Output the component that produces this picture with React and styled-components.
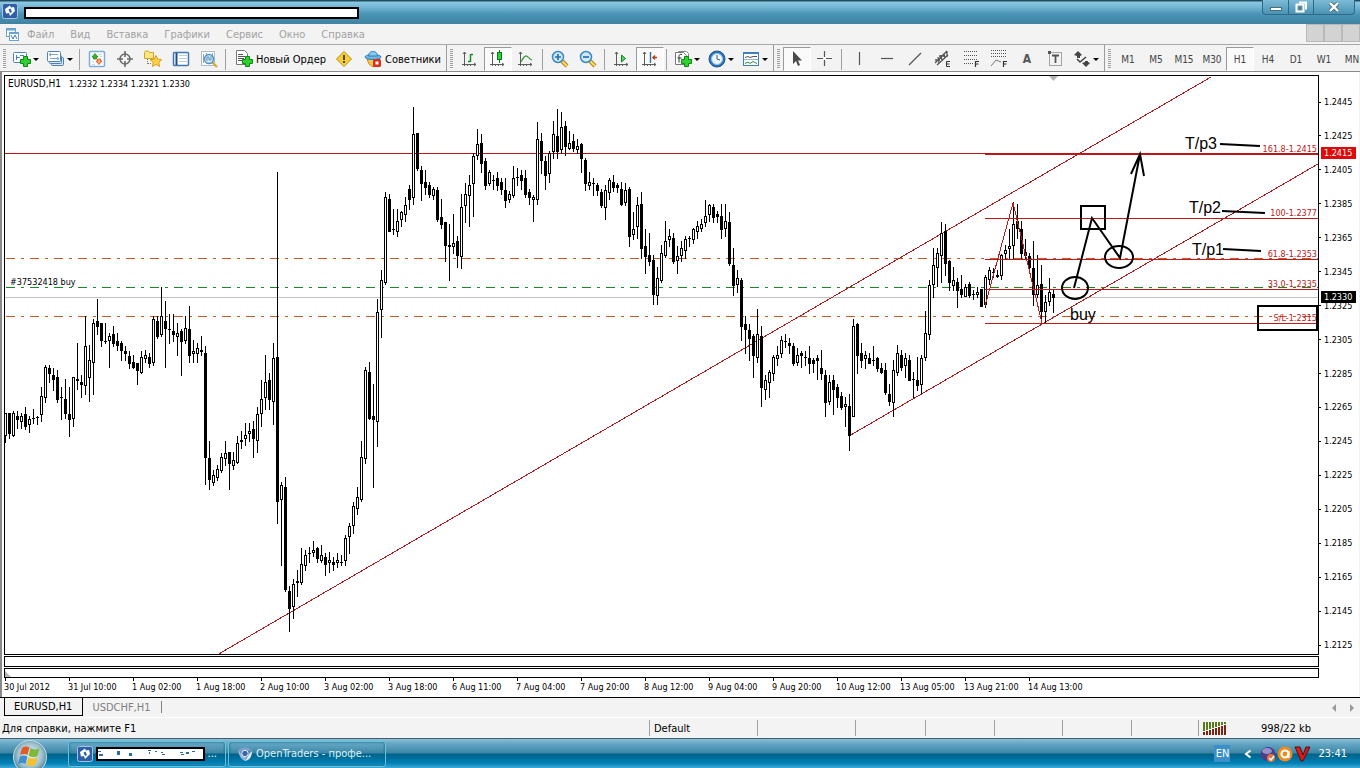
import React from 'react';
import styled, { createGlobalStyle } from 'styled-components';

const GlobalStyle = createGlobalStyle`
  * {
    box-sizing: border-box;
  }
  body {
    margin: 0;
    background: #f3f3f3;
    color: #000;
    font-family: 'DejaVu Sans Condensed', 'DejaVu Sans', sans-serif;
    font-size: 11px;
  }
  button {
    border: 0;
    padding: 0;
    background: none;
    font: inherit;
    color: inherit;
    white-space: nowrap;
  }
  svg {
    display: block;
    flex: none;
  }
`;

// one candle each 4px: high, top of body, bottom of body, low, u(p) / d(own)
const CANDLES = `
413 413 436 443 u|413 413 434 439 d|411 413 436 437 u|411 416 420 429 d|413 416 422 429 u|407 414 427 430 d|416 419 425 433 u|409 418 419 424 d|
416 417 418 425 d|387 396 415 422 u|365 367 398 403 u|365 368 374 383 d|368 375 380 391 d|370 377 400 403 d|387 397 398 420 d|379 399 414 419 d|
387 414 420 437 d|377 377 419 427 u|343 379 381 390 d|375 382 385 398 d|316 346 386 395 u|345 360 378 402 u|319 323 363 395 u|299 321 327 335 d|
323 323 341 347 d|323 341 342 344 d|333 336 341 368 u|326 334 344 347 d|333 341 346 351 d|341 343 351 361 d|346 351 354 361 d|351 356 364 369 d|
355 362 368 369 d|363 363 371 385 d|351 357 373 374 u|350 355 359 363 u|353 357 364 368 d|316 319 363 366 u|316 321 337 339 d|287 316 335 337 u|
301 321 329 368 d|314 329 330 344 d|314 331 335 342 d|323 333 337 356 u|329 331 342 376 d|316 328 341 344 u|306 329 356 363 d|340 351 354 363 u|
343 348 354 363 u|336 350 352 356 d|346 353 458 485 d|441 458 480 490 d|470 475 483 486 u|465 469 478 481 u|453 457 471 473 u|441 453 459 466 u|
452 452 464 490 d|452 460 466 470 u|436 443 463 464 u|431 440 442 449 d|423 435 439 446 u|423 431 434 442 u|421 429 439 458 d|407 414 441 453 u|
380 399 414 427 u|355 382 398 410 u|373 380 400 410 d|343 358 402 425 u|172 357 502 524 d|482 485 500 566 u|477 487 590 592 d|586 591 609 632 d|
579 584 607 619 u|570 581 583 597 d|548 564 583 585 u|550 555 566 571 u|547 553 554 563 d|541 550 553 557 u|547 548 559 563 d|545 555 561 563 u|
553 557 565 576 d|552 560 563 573 u|557 562 565 571 d|553 560 563 568 u|555 562 563 566 d|535 538 561 566 u|523 526 537 554 u|502 506 526 534 u|
487 497 509 515 u|441 457 500 502 u|367 370 459 464 u|362 372 419 420 d|384 416 420 488 d|299 312 422 447 u|270 280 310 338 u|192 197 283 285 u|
194 199 232 232 d|209 229 230 235 d|209 221 232 237 u|211 212 220 227 u|197 205 215 222 u|185 189 200 210 d|107 134 198 205 u|133 133 169 171 d|
166 170 184 201 d|170 182 188 195 d|182 185 195 198 d|187 189 196 200 u|187 190 220 222 d|199 217 225 229 d|222 222 246 262 d|224 245 247 281 d|
214 243 247 254 u|236 241 256 268 d|194 207 257 269 u|183 194 206 223 u|175 185 196 227 u|153 156 184 217 u|129 144 156 160 u|134 143 164 173 d|
158 161 186 190 d|170 172 184 186 u|175 180 181 190 d|172 178 186 191 d|178 182 190 195 d|178 190 201 208 d|191 194 200 203 u|166 178 196 198 u|
168 177 178 186 d|170 175 181 190 d|170 178 195 198 d|189 192 198 205 d|195 197 200 222 u|122 139 200 205 u|133 141 161 174 d|156 161 176 190 d|
151 153 174 183 u|121 134 152 159 u|109 136 152 159 d|112 127 150 154 u|121 126 147 156 d|131 143 149 150 u|134 141 149 152 d|139 146 150 154 u|
143 144 159 173 d|158 160 184 191 d|172 182 186 190 u|178 183 184 196 d|183 185 191 196 d|189 192 206 208 d|185 190 208 220 u|178 180 193 200 u|
175 182 188 192 d|183 185 188 193 d|182 189 205 206 d|183 190 203 206 u|187 189 237 247 d|212 229 235 240 u|197 205 227 239 u|192 204 249 259 d|
229 246 257 274 d|233 255 262 266 d|255 260 295 305 d|267 278 296 305 u|245 253 281 283 u|221 241 256 258 u|229 236 240 247 u|233 238 262 264 d|
246 256 261 274 u|241 248 256 262 u|236 239 251 259 u|236 238 239 247 d|228 229 240 244 u|221 226 232 239 u|219 224 229 232 u|200 216 223 227 u|
204 205 215 222 u|204 207 218 223 d|211 214 217 223 d|204 216 230 239 d|204 221 229 237 u|212 222 264 266 d|248 265 286 296 d|270 278 285 293 u|
278 280 327 341 d|316 324 330 354 d|324 330 339 361 d|334 336 356 378 d|309 334 358 363 u|326 336 388 407 d|375 380 390 400 u|370 372 383 398 u|
355 357 374 381 u|346 355 359 366 u|336 340 354 358 u|334 341 342 348 d|338 343 346 354 d|343 346 364 366 d|348 355 363 366 u|351 353 356 368 d|
351 357 358 366 d|346 358 364 374 d|358 360 364 373 d|355 358 361 380 d|350 368 374 380 d|370 375 403 417 d|375 382 402 405 u|375 380 390 415 d|
384 387 398 408 d|392 396 408 410 d|397 404 407 427 u|394 406 436 451 d|319 326 417 417 u|323 324 356 374 d|343 353 361 368 d|351 355 359 369 u|
353 358 364 364 d|346 360 361 366 d|357 358 369 372 d|363 368 373 374 d|363 370 393 395 d|384 394 402 406 d|360 370 403 417 u|345 353 373 376 u|
350 355 368 371 d|353 358 366 378 u|355 360 381 381 d|372 379 380 398 d|357 380 386 391 d|355 358 385 394 u|311 333 358 361 u|280 285 335 340 u|
248 265 285 298 u|248 253 268 287 u|222 233 256 283 u|224 231 264 276 d|260 261 283 291 d|267 280 286 291 u|278 282 291 308 d|275 289 295 298 d|
284 287 297 297 u|282 284 296 298 d|290 294 295 300 d|287 292 295 298 u|289 289 307 307 d|275 277 305 308 u|267 270 280 285 u|268 272 273 278 d|
270 275 277 278 d|254 255 276 280 u|245 250 254 259 u|229 246 249 260 u|202 224 246 260 u|204 221 229 239 d|221 229 254 260 d|239 252 256 260 d|
253 256 268 270 d|241 268 295 306 d|255 285 295 298 u|265 284 312 324 d|295 302 312 324 u|278 292 302 306 u|290 294 298 313 d`
  .split('|')
  .map((row) => row.trim().split(' '))
  .map(([high, top, bottom, low, dir], i) => ({
    x: 5 + i * 4,
    high: +high,
    top: +top,
    bottom: +bottom,
    low: +low,
    up: dir === 'u',
  }));

const PRICES = [
  '1.2445', '1.2425', '1.2405', '1.2385', '1.2365', '1.2345', '1.2325', '1.2305', '1.2285',
  '1.2265', '1.2245', '1.2225', '1.2205', '1.2185', '1.2165', '1.2145', '1.2125',
];

const DATES = [
  '30 Jul 2012', '31 Jul 10:00', '1 Aug 02:00', '1 Aug 18:00', '2 Aug 10:00', '3 Aug 02:00',
  '3 Aug 18:00', '6 Aug 11:00', '7 Aug 04:00', '7 Aug 20:00', '8 Aug 12:00', '9 Aug 04:00',
  '9 Aug 20:00', '10 Aug 12:00', '13 Aug 05:00', '13 Aug 21:00', '14 Aug 13:00',
];

const FIBO = [
  { y: 154, label: '161.8-1.2415' },
  { y: 218, label: '100-1.2377' },
  { y: 259, label: '61.8-1.2353' },
  { y: 289, label: '33.0-1.2335' },
  { y: 323, label: 'S/L-1.2315' },
];

const MENU = ['Файл', 'Вид', 'Вставка', 'Графики', 'Сервис', 'Окно', 'Справка'];
const PERIODS = ['M1', 'M5', 'M15', 'M30', 'H1', 'H4', 'D1', 'W1', 'MN'];

/* ---------- icons ---------- */

const Icon = ({ w = 18, h = 18, children }) => (
  <svg width={w} height={h} viewBox={`0 0 ${w} ${h}`} fill="none" aria-hidden="true">
    {children}
  </svg>
);

const Plus = () => (
  <path d="M10.5 6.5h4v3h3v4h-3v3h-4v-3h-3v-4h3z" fill="#2fd02f" stroke="#0a8a12" />
);

const AppIcon = () => (
  <Icon w={16} h={16}>
    <rect x=".5" y=".5" width="15" height="15" rx="2" fill="#2f5fa6" stroke="#a9c3dc" />
    <path d="M3 6l5-3.500 1 2 3-.5 1 4-5 5-1-3-3 .5z" fill="#fff" />
    <path d="M6.500 6.500l2-1 1.500 3.500-2 1z" fill="#2f5fa6" />
  </Icon>
);

const ChartsIcon = () => (
  <Icon w={15} h={15}>
    <rect x="1.500" y="1.500" width="9" height="8" fill="#fff" stroke="#6aa3cf" />
    <path d="M1 2.500h10" stroke="#6aa3cf" strokeWidth="2" />
    <rect x="4.500" y="5.500" width="9" height="8" fill="#fff" stroke="#6aa3cf" />
    <path d="M4 6.500h10" stroke="#6aa3cf" />
    <path d="M6 8l2 4 2-4 2 4" stroke="#3f7fb4" />
  </Icon>
);

const NewChartIcon = () => (
  <Icon>
    <rect x=".5" y="2.500" width="13" height="10" rx="1" fill="#fff" stroke="#4c83b4" />
    <path d="M3.500 5v5M3 7.500h4M7 5.500h4" stroke="#4c83b4" />
    <Plus />
  </Icon>
);

const ProfilesIcon = () => (
  <Icon>
    <rect x="4.500" y="7.500" width="12" height="8" rx="1" fill="#d5e6f4" stroke="#4c83b4" />
    <rect x="2.500" y="5.500" width="12" height="8" rx="1" fill="#d5e6f4" stroke="#4c83b4" />
    <rect x=".5" y="1.500" width="13" height="10" rx="1" fill="#fff" stroke="#4c83b4" />
    <path d="M3 4.500h8M3 8.500h8M4 3l-2 1.500L4 6M10 7l2 1.500-2 1.500" stroke="#7ea6c8" />
  </Icon>
);

const MarketIcon = () => (
  <Icon>
    <rect x="1.500" y="1.500" width="15" height="15" rx="1" fill="#fff" stroke="#7badd6" strokeWidth="1.500" />
    <path d="M4 4.500h1M10 4.500h4M4 14.500h3M4 11.500h2M12 6.500h2" stroke="#c9d9e6" />
    <path d="M7 3.500l3 3.500H8.500v2h-3V7H4z" fill="#2fb82f" stroke="#178a1c" strokeWidth=".8" />
    <path d="M11 14.500l3-3.500h-1.500V9h-3v2H8z" fill="#ffa070" stroke="#d9501a" strokeWidth=".8" />
  </Icon>
);

const TargetIcon = () => (
  <Icon>
    <circle cx="9" cy="9" r="5" stroke="#6b6b6b" strokeWidth="1.600" />
    <path d="M9 1v6M9 11v6M1 9h6M11 9h6" stroke="#6b6b6b" strokeWidth="1.600" />
  </Icon>
);

const NavigatorIcon = () => (
  <Icon>
    <path d="M.5 2.500l1-1.500h3l1 1.500h4v6h-9z" fill="#ffe680" stroke="#cfa52a" />
    <path d="M3.500 9v6M4 13.500h4" stroke="#777" strokeDasharray="1 1" />
    <path d="M12 5.500l1.800 3.700 4 .5-3 2.700.8 4L12 14.500l-3.600 1.900.8-4-3-2.700 4-.5z" fill="#ffd23e" stroke="#c8920e" strokeWidth=".8" />
  </Icon>
);

const TerminalIcon = () => (
  <Icon>
    <rect x="1.500" y="2.500" width="15" height="13" rx="1" fill="#fff" stroke="#3f78b4" strokeWidth="1.500" />
    <path d="M4.500 3v12" stroke="#22507e" strokeWidth="2" />
    <path d="M7 5.500h8M7 8.500h8M7 11.500h8" stroke="#b7cfe4" />
  </Icon>
);

const TesterIcon = () => (
  <Icon>
    <rect x="1.500" y="1.500" width="13" height="14" fill="#fff" stroke="#a9bccb" />
    <path d="M3.500 4v9M6.500 3v8M12.500 3v9" stroke="#8fa8bb" />
    <path d="M12 12l5 5" stroke="#d9a83a" strokeWidth="2.400" />
    <circle cx="9" cy="9" r="4.500" fill="#d6ebfa" fillOpacity=".8" stroke="#4f8fc0" strokeWidth="1.400" />
    <path d="M7 11V7h2v3h2V6" stroke="#4f8fc0" />
  </Icon>
);

const OrderIcon = () => (
  <Icon>
    <path d="M1.500.5h8l3 3v11h-11z" fill="#fff" stroke="#777" />
    <path d="M3 4.500h5M3 6.500h7M3 8.500h6M3 10.500h4" stroke="#555" />
    <Plus />
  </Icon>
);

const WarningIcon = () => (
  <Icon>
    <path d="M9 1.500L16.500 9 9 16.500 1.500 9z" fill="#f5cf35" stroke="#b98f15" strokeLinejoin="round" />
    <path d="M9 5v5M9 11v2" stroke="#5c4800" strokeWidth="2" />
  </Icon>
);

const ExpertIcon = () => (
  <Icon>
    <path d="M3 9h12l-1 5-5 3-4-3z" fill="#f6c84b" stroke="#c58f1d" />
    <ellipse cx="9" cy="7" rx="8" ry="2.500" fill="#6cb7e6" stroke="#2f7fb3" />
    <path d="M4.500 6C5 2 7 1.500 9 1.500S13 2 13.500 6z" fill="#86caf2" stroke="#2f7fb3" />
    <rect x="9" y="9" width="8" height="8" rx="1.500" fill="#d9301f" />
    <rect x="11.500" y="11.500" width="3" height="3" fill="#fff" />
  </Icon>
);

const Axes = () => (
  <path d="M3.500 2v14M1 14.500h14M2 4l1.500-2L5 4M13 13l2 1.500-2 1.500M6.500 14v2M9.500 14v2" stroke="#5c5c5c" />
);

const BarsIcon = () => (
  <Icon>
    <Axes />
    <path d="M9.500 4v8M10 4.500h2M7 11.500h2" stroke="#128a20" strokeWidth="1.400" />
  </Icon>
);

const CandlesIcon = () => (
  <Icon>
    <Axes />
    <path d="M10.500 0v13" stroke="#0a7a18" />
    <rect x="8.500" y="2.500" width="4" height="7" fill="#2fce3e" stroke="#0a7a18" />
  </Icon>
);

const LineIcon = () => (
  <Icon>
    <Axes />
    <path d="M4 12c2-4 3-6 5-6s3 3 6 4" stroke="#3d9a48" strokeWidth="1.300" />
  </Icon>
);

const ZoomIcon = ({ minus }) => (
  <Icon>
    <path d="M11 11l5 5" stroke="#a37a18" strokeWidth="4" />
    <path d="M11 11l5 5" stroke="#ffd75a" strokeWidth="2.400" />
    <circle cx="7" cy="7" r="5.500" fill="#cfe8fb" stroke="#3a88c4" strokeWidth="1.500" />
    <path d={minus ? 'M4 7h6' : 'M4 7h6M7 4v6'} stroke="#2a6fae" strokeWidth="1.700" />
  </Icon>
);

const ScrollIcon = () => (
  <Icon>
    <Axes />
    <path d="M8.500 5l4 3.500-4 3.500z" fill="#4fd35a" stroke="#0e8a1c" />
  </Icon>
);

const ShiftIcon = () => (
  <Icon>
    <Axes />
    <path d="M9.500 2v11" stroke="#2f6da0" strokeWidth="1.400" />
    <path d="M16 7.500h-4M14 5.500L12 7.500l2 2" stroke="#b5401a" strokeWidth="1.500" />
  </Icon>
);

const IndicatorsIcon = () => (
  <Icon>
    <path d="M4.500 3.500v-2h8l2 2v9" fill="#fff" stroke="#888" />
    <path d="M1.500 2.500h8l3 3v9h-11z" fill="#fff" stroke="#777" />
    <path d="M8 4.500c-2-.5-3 0-3 2v6M3.500 8h4" stroke="#333" />
    <Plus />
  </Icon>
);

const ClockIcon = () => (
  <Icon>
    <circle cx="9" cy="9" r="8" fill="#2f74b8" stroke="#1d568f" />
    <circle cx="9" cy="9" r="5.500" fill="#eef6fd" stroke="#8ec1ea" />
    <path d="M9 5v4l3 1" stroke="#3a5a78" />
  </Icon>
);

const TemplateIcon = () => (
  <Icon>
    <rect x="1.500" y="2.500" width="15" height="13" fill="#fff" stroke="#3f80b8" />
    <path d="M1 3h16" stroke="#3f80b8" strokeWidth="2" />
    <path d="M3 7.500l3-1 2 1 3-1h4" stroke="#555" />
    <path d="M2 9.500h14" stroke="#8fb4d4" />
    <path d="M3 13.500l3-1.500 2 1.500 3-2 4 2" stroke="#2f8a3a" />
  </Icon>
);

const CursorIcon = () => (
  <Icon>
    <path d="M5 1v13l3-3 2 5 2-1-2-4.500h4z" fill="#4a4a4a" />
  </Icon>
);

const Stroke = ({ d }) => (
  <Icon>
    <path d={d} stroke="#555" strokeWidth="1.200" />
  </Icon>
);

const ChannelIcon = () => (
  <Icon>
    <path d="M1 13L13 1M3 15L14 5M4 7l1 6M7 5l1 6M10 3l1 6M13 1l0 6M1 10h5M5 6h6" stroke="#555" strokeWidth="1.300" />
    <path d="M16 11.500h-3.500v5H16M13 14h2.500" stroke="#333" />
  </Icon>
);

const FiboIcon = ({ fan }) => (
  <Icon>
    <path
      d={fan ? 'M1 .5h16M1 3.500h16M1 6.500h16' : 'M2 1.500h14M2 5.500h14M2 9.500h14M2 13.500h9'}
      stroke="#555"
      strokeDasharray="1 1"
    />
    {fan && <path d="M1 16l5-6 5 2" stroke="#777" />}
    <path d="M17 11.500h-3.500V17M14 14h2.500" stroke="#333" strokeWidth="1.200" />
  </Icon>
);

const LabelIcon = () => (
  <Icon>
    <rect x="3.500" y="2.500" width="12" height="13" stroke="#555" strokeDasharray="1 1" />
    <path d="M6 5.500h7M9.500 5v8" stroke="#555" strokeWidth="1.800" />
    <path d="M2 1h3v3H2z" fill="#555" />
  </Icon>
);

const ArrowsIcon = () => (
  <Icon>
    <path d="M5 1l4 4-2 1v2H4V6L1 5zM13 17l4-4-2-1v-1h-3v1l-3 1z" fill="#444" />
    <path d="M4 9l3 3 6-5" stroke="#444" strokeWidth="1.500" />
  </Icon>
);

const SignalIcon = () => (
  <svg width="24" height="13" viewBox="0 0 24 13" shapeRendering="crispEdges" aria-hidden="true">
    {[0, 1, 2, 3, 4, 5, 6, 7].map((i) => (
      <React.Fragment key={i}>
        <rect x={i * 3} y="0" width="2" height={9 - i} fill="#5a7a1e" />
        <rect x={i * 3} y={10 - i} width="2" height={3 + i} fill="#7c2412" />
      </React.Fragment>
    ))}
  </svg>
);

const StartOrb = () => (
  <svg width="36" height="28" viewBox="0 0 36 28" aria-hidden="true">
    <defs>
      <radialGradient id="orb" cx="50%" cy="45%" r="60%">
        <stop offset="0" stopColor="#eaf4f8" />
        <stop offset=".6" stopColor="#9fc3cf" />
        <stop offset="1" stopColor="#3b6f88" />
      </radialGradient>
    </defs>
    <circle cx="18" cy="17" r="16.500" fill="url(#orb)" stroke="#c5dde6" />
    <path d="M10 8c3-2 5-2 7.500-.5l-2 7.500c-2-1.500-5-1.500-7.500 0z" fill="#e4592b" />
    <path d="M18.500 8c3 2 6 2 9 .5l-2 7.500c-3 1.500-6 1.500-9-.5z" fill="#7fb83a" />
    <path d="M8 16.500c3-1.500 5-1.500 7.500 0l-2 7.500c-2-1.500-5-1.500-7.500 0z" fill="#3f8ed0" />
    <path d="M16.500 17c3 2 6 2 9 .5l-2 7.500c-3 1.500-6 1-9-.5z" fill="#f5c02c" />
  </svg>
);

const BrowserIcon = () => (
  <Icon w={16} h={16}>
    <path d="M1 5c2-4 11-5 14 0-3-1-5 0-6 2z" fill="#7f9fd0" />
    <path d="M1 4c1 6 3 9 7 11l2-5-4-1z" fill="#9db8e0" />
    <path d="M15 5c0 5-2 9-7 10l4-7z" fill="#dfe9f6" />
    <circle cx="8" cy="7.500" r="3.200" fill="#3c63a6" stroke="#e6eff9" />
  </Icon>
);

/* ---------- chart drawing ---------- */

const HLine = ({ x = 5, y, color }) => (
  <rect x={x} y={y} width={1318 - x} height="1" fill={color} stroke="none" />
);

const Candle = ({ x, high, top, bottom, low, up }) => (
  <g>
    <rect x={x} y={high} width="1" height={low - high} />
    {up ? (
      <rect x={x - 0.5} y={top + 0.5} width="2" height={Math.max(bottom - top - 1, 1)} fill="#fff" stroke="#000" />
    ) : (
      <rect x={x - 1} y={top} width="3" height={Math.max(bottom - top, 1)} />
    )}
  </g>
);

const ChartDrawing = () => (
  <PlotSvg aria-label="EURUSD,H1">
    <g transform="translate(-5 -76)">
      <g shapeRendering="crispEdges" fill="none">
        <HLine y={297} color="#c0c0c0" />
        <path d="M6 258.500H1318M6 316.500H1318" stroke="#cc5a24" strokeDasharray="9 6 3 6" />
        <path d="M6 287.500H1318" stroke="#148a24" strokeDasharray="9 6 3 6" />
        <path d="M217 655L1211 77M849 436L1318 164" stroke="#b01c1c" />
        <HLine y={153} color="#c01010" />
      </g>
      <g shapeRendering="crispEdges">
        {CANDLES.map((c) => (
          <Candle key={c.x} {...c} />
        ))}
      </g>
      <g shapeRendering="crispEdges" fill="none">
        <path d="M985 306L1013 203L1042 323" stroke="#b81c1c" />
        {FIBO.map(({ y }) => (
          <HLine key={y} x={985} y={y} color="#c41818" />
        ))}
      </g>
      <g fill="#c01818" fontSize="9" textAnchor="end">
        {FIBO.map(({ y, label }) => (
          <text key={y} x="1317" y={y - 2}>
            {label}
          </text>
        ))}
      </g>
      <path d="M1049 76h9l-4.500 5z" fill="#b4b4b4" />
      <text x="8" y="87" fontSize="10">EURUSD,H1</text>
      <text x="69" y="87" fontSize="9">1.2332 1.2334 1.2321 1.2330</text>
      <text x="10" y="285" fontSize="9">#37532418 buy</text>

      <g fill="none" stroke="#000" strokeWidth="2">
        <ellipse cx="1075" cy="288" rx="13" ry="11" />
        <ellipse cx="1119" cy="257" rx="14" ry="11" />
        <path d="M1081 206h24v23h-24z" />
        <path d="M1074 288L1092 218L1120 258L1140 154M1131 174L1140 154L1144 176" />
        <path d="M1220 144l40 2M1222 211l43 2M1223 249l38 2" />
        <path d="M1258 306h59v24h-59z" />
      </g>
      <Note x="1185" y="149">T/p3</Note>
      <Note x="1189" y="213">T/p2</Note>
      <Note x="1192" y="255">T/p1</Note>
      <Note x="1070" y="320">buy</Note>
    </g>
  </PlotSvg>
);

/* ---------- page ---------- */

const DropTool = ({ label, children }) => (
  <Tool $drop aria-label={label}>
    {children}
    <Caret />
  </Tool>
);

const App = () => (
  <Window>
    <GlobalStyle />
    <TitleBar>
      <AppIcon />
      <TitleMask />
      <WindowButtons>
        <WindowButton aria-label="Minimize">
          <Icon w={12} h={12}>
            <rect x=".5" y="6.500" width="11" height="3" fill="#fff" stroke="#4c6f80" />
          </Icon>
        </WindowButton>
        <WindowButton aria-label="Restore">
          <Icon w={12} h={12}>
            <path d="M4 1.500h7v7" stroke="#fff" strokeWidth="2" />
            <rect x="1.500" y="3.500" width="7" height="7" stroke="#fff" strokeWidth="2" />
            <rect x="4" y="6" width="2" height="2" stroke="#4c6f80" />
          </Icon>
        </WindowButton>
        <WindowButton $wide aria-label="Close">
          <Icon w={12} h={12}>
            <path d="M2 2l8 8M10 2l-8 8" stroke="#4c6f80" strokeWidth="4" />
            <path d="M2 2l8 8M10 2l-8 8" stroke="#fff" strokeWidth="2.400" />
          </Icon>
        </WindowButton>
      </WindowButtons>
    </TitleBar>

    <MenuBar>
      <ChartsIcon />
      <Menu>
        {MENU.map((item) => (
          <button key={item}>{item}</button>
        ))}
      </Menu>
      <ChildButtons>
        <ChildButton aria-label="Minimize chart" />
        <ChildButton aria-label="Restore chart" />
        <ChildButton aria-label="Close chart" />
      </ChildButtons>
    </MenuBar>

    <ToolBar>
      <ToolGroup>
        <Grip />
        <DropTool label="New chart"><NewChartIcon /></DropTool>
        <DropTool label="Profiles"><ProfilesIcon /></DropTool>
        <Divider />
        <Tool aria-label="Market watch"><MarketIcon /></Tool>
        <Tool aria-label="Data window"><TargetIcon /></Tool>
        <Tool aria-label="Navigator"><NavigatorIcon /></Tool>
        <Tool aria-label="Terminal"><TerminalIcon /></Tool>
        <Tool aria-label="Strategy tester"><TesterIcon /></Tool>
        <Divider />
        <TextTool>
          <OrderIcon />
          Новый Ордер
        </TextTool>
        <Tool aria-label="Warning"><WarningIcon /></Tool>
        <TextTool>
          <ExpertIcon />
          Советники
        </TextTool>
      </ToolGroup>
      <ToolGroup>
        <Grip />
        <Tool aria-label="Bar chart"><BarsIcon /></Tool>
        <Tool $pressed aria-label="Candlesticks"><CandlesIcon /></Tool>
        <Tool aria-label="Line chart"><LineIcon /></Tool>
        <Divider />
        <Tool aria-label="Zoom in"><ZoomIcon /></Tool>
        <Tool aria-label="Zoom out"><ZoomIcon minus /></Tool>
        <Divider />
        <Tool aria-label="Auto scroll"><ScrollIcon /></Tool>
        <Tool $pressed aria-label="Chart shift"><ShiftIcon /></Tool>
        <Divider />
        <DropTool label="Indicators"><IndicatorsIcon /></DropTool>
        <DropTool label="Periods"><ClockIcon /></DropTool>
        <DropTool label="Templates"><TemplateIcon /></DropTool>
      </ToolGroup>
      <ToolGroup>
        <Grip />
        <Tool $pressed aria-label="Cursor"><CursorIcon /></Tool>
        <Tool aria-label="Crosshair"><Stroke d="M8.500 1v6M8.500 10v6M1 8.500h6M10 8.500h6" /></Tool>
        <Divider />
        <Tool aria-label="Vertical line"><Stroke d="M9.500 2v13" /></Tool>
        <Tool aria-label="Horizontal line"><Stroke d="M3 8.500h12" /></Tool>
        <Tool aria-label="Trendline"><Stroke d="M3 15L15 3" /></Tool>
        <Tool aria-label="Channel"><ChannelIcon /></Tool>
        <Tool aria-label="Fibonacci"><FiboIcon /></Tool>
        <Tool aria-label="Fibonacci fan"><FiboIcon fan /></Tool>
        <Tool aria-label="Text"><Letter>A</Letter></Tool>
        <Tool aria-label="Text label"><LabelIcon /></Tool>
        <DropTool label="Arrows"><ArrowsIcon /></DropTool>
      </ToolGroup>
      <ToolGroup>
        <Grip />
        {PERIODS.map((period) => (
          <Period key={period} $pressed={period === 'H1'}>{period}</Period>
        ))}
      </ToolGroup>
    </ToolBar>

    <Chart>
      <Panes>
        <Plot>
          <ChartDrawing />
        </Plot>
        <SubPane $height={11} />
        <SubPane $height={10}>
          <Icon w={6} h={6}><path d="M0 0l6 6H0z" fill="#b4b4b4" /></Icon>
        </SubPane>
        <TimeAxis>
          {DATES.map((date) => (
            <TimeLabel key={date}>{date}</TimeLabel>
          ))}
        </TimeAxis>
      </Panes>
      <PriceAxis>
        {PRICES.map((price) => (
          <PriceLabel key={price}>{price}</PriceLabel>
        ))}
        <PriceTag $top={72} $color="#e00808">1.2415</PriceTag>
        <PriceTag $top={216} $color="#000">1.2330</PriceTag>
      </PriceAxis>
    </Chart>

    <Tabs>
      <Tab $active>EURUSD,H1</Tab>
      <Tab>USDCHF,H1</Tab>
      <TabScroll>
        <button aria-label="Previous tab">
          <Icon w={5} h={8}><path d="M4 0v8L0 4z" fill="#999" /></Icon>
        </button>
        <button aria-label="Next tab">
          <Icon w={5} h={8}><path d="M1 0v8l4-4z" fill="#999" /></Icon>
        </button>
      </TabScroll>
    </Tabs>

    <StatusBar>
      <StatusHelp>Для справки, нажмите F1</StatusHelp>
      <StatusCell $width={108}>Default</StatusCell>
      <StatusCell $width={98} />
      <StatusCell $width={70} />
      <StatusCell $width={69} />
      <StatusCell $width={68} />
      <StatusCell $width={69} />
      <StatusCell $width={67} />
      <StatusCell $width={162}>
        <SignalIcon />
        <Traffic>998/22 kb</Traffic>
      </StatusCell>
    </StatusBar>

    <TaskBar>
      <StartButton aria-label="Start"><StartOrb /></StartButton>
      <Task>
        <AppIcon />
        <TaskMask>
          <Icon w={108} h={10}>
            <path
              d="M0 2h3v1H0zM1 5h4v2H1zM19 2h3v4h-3zM31 4h3v3h-3zM50 1h3v1h-3zM51 3h1v2h-1zM57 2h2v1h-2zM63 3h2v1h-2zM64 5h3v1h-3zM82 3h3v1h-3zM83 5h3v1h-3zM88 3h3v2h-3zM94 2h3v1h-3z"
              fill="#2c6f96"
            />
          </Icon>
        </TaskMask>
        ...
      </Task>
      <Task>
        <BrowserIcon />
        <TaskTitle>OpenTraders - профе...</TaskTitle>
      </Task>
      <Tray>
        <Language>EN</Language>
        <button aria-label="Show hidden icons">
          <Icon w={8} h={10}><path d="M6.500 1.500L2 5l4.500 3.500" stroke="#fff" strokeWidth="2" /></Icon>
        </button>
        <TrayIcons>
          <Icon w={16} h={16}>
            <ellipse cx="8" cy="8" rx="7.500" ry="7" fill="#4b3f8c" />
            <ellipse cx="7" cy="5" rx="5" ry="3" fill="#9a90cc" />
            <circle cx="11" cy="12" r="4" fill="#e8713a" />
            <path d="M9 12l2 2 3-4" stroke="#fff" strokeWidth="1.500" />
          </Icon>
          <Icon w={16} h={16}>
            <circle cx="8" cy="8" r="7.500" fill="#f08a1c" />
            <circle cx="8" cy="8" r="3.500" stroke="#fff" strokeWidth="2.200" />
            <path d="M11.500 5v7" stroke="#fff" strokeWidth="2" />
          </Icon>
          <Icon w={16} h={16}>
            <path d="M1 1h5l3 8 3-8h4L9 15H7z" fill="#d41c1c" stroke="#5c0d0d" />
          </Icon>
        </TrayIcons>
        <span>23:41</span>
      </Tray>
    </TaskBar>
  </Window>
);

export default App;

const Window = styled.div`
  min-height: 100vh;
  display: flex;
  flex-direction: column;
  overflow: hidden;
`;

const TitleBar = styled.header`
  height: 24px;
  display: flex;
  align-items: flex-start;
  padding: 3px 5px 0 2px;
  background: linear-gradient(#1f4c5e 1px, #8cc8e2 2px, #6fb2d2 8px, #4a94b6 14px, #3f83a1 24px);
`;

const TitleMask = styled.div`
  width: 335px;
  height: 12px;
  margin: 4px 0 0 6px;
  background: #fff;
  border: 2px solid #000;
`;

const WindowButtons = styled.div`
  display: flex;
  margin: -3px 0 0 auto;
  border: 1px solid #2f6a84;
  border-top: 0;
  border-radius: 0 0 4px 4px;
  background: linear-gradient(#7dbbd6, #4a93b4);
`;

const WindowButton = styled.button`
  width: ${({ $wide }) => ($wide ? 41 : 25)}px;
  height: 14px;
  display: grid;
  place-items: center;
  & + & {
    border-left: 1px solid #2f6a84;
  }
`;

const MenuBar = styled.nav`
  height: 21px;
  display: flex;
  align-items: center;
  padding-left: 5px;
  border-bottom: 1px solid #a8a8a8;
`;

const Menu = styled.div`
  display: flex;
  gap: 16px;
  margin-left: 7px;
  color: #a2a2a2;
`;

const ChildButtons = styled.div`
  display: flex;
  margin-left: auto;
  align-self: flex-start;
`;

const ChildButton = styled.button`
  width: 18px;
  height: 18px;
  background: #d3d3d3;
  border: 1px solid #b9b9b9;
`;

const ToolBar = styled.div`
  height: 27px;
  display: flex;
  overflow: hidden;
  background: #f3f3f3;
  border-bottom: 1px solid #8a8a8a;
`;

const ToolGroup = styled.div`
  display: flex;
  flex: none;
  align-items: center;
  padding: 2px 1px 0 0;
  border-right: 1px solid #9c9c9c;
`;

const Grip = styled.span`
  width: 3px;
  height: 20px;
  margin: 0 3px;
  background: repeating-linear-gradient(#a0a0a0 0 1px, transparent 1px 2px);
`;

const Divider = styled.span`
  width: 1px;
  height: 21px;
  margin: 0 3px 0 2px;
  background: #a0a0a0;
`;

const Tool = styled.button`
  width: ${({ $drop }) => ($drop ? 34 : 28)}px;
  height: 24px;
  display: flex;
  align-items: center;
  justify-content: center;
  gap: 2px;
  border: 1px solid;
  border-color: ${({ $pressed }) => ($pressed ? '#9a9a9a #fff #fff #9a9a9a' : 'transparent')};
  background: ${({ $pressed }) => ($pressed ? '#fafafa' : 'none')};
`;

const Caret = styled.span`
  border: 3px solid transparent;
  border-top-color: #000;
  border-bottom: 0;
`;

const TextTool = styled.button`
  display: flex;
  align-items: center;
  gap: 3px;
  padding: 0 4px 0 6px;
`;

const Letter = styled.span`
  font-size: 12px;
  font-weight: bold;
  color: #555;
`;

const Period = styled(Tool)`
  font-size: 10px;
  color: #444;
`;

const Chart = styled.main`
  flex: 1;
  display: flex;
  margin-right: 1px;
  padding: 3px 0 2px 2px;
  background: #fff;
  border-left: 2px solid #8a8a8a;
`;

const Panes = styled.div`
  flex: 1;
  min-width: 0;
  display: flex;
  flex-direction: column;
  gap: 1px;
`;

const Plot = styled.div`
  flex: 1;
  border: 1px solid #000;
`;

const PlotSvg = styled.svg`
  width: 100%;
  height: 578px;
  overflow: hidden;
`;

const Note = styled.text`
  font-family: 'Liberation Sans', Arial, sans-serif;
  font-size: 16px;
`;

const SubPane = styled.div`
  height: ${({ $height }) => $height}px;
  display: flex;
  align-items: flex-end;
  border: 1px solid #000;
`;

const TimeAxis = styled.div`
  height: 17px;
  display: flex;
  margin-top: -1px;
`;

const TimeLabel = styled.span`
  flex: none;
  width: 64px;
  white-space: nowrap;
  font-size: 9px;
  line-height: 12px;
  &::before {
    content: '';
    display: block;
    width: 1px;
    height: 3px;
    margin-left: 1px;
    background: #000;
  }
`;

const PriceAxis = styled.div`
  position: relative;
  width: 40px;
  display: flex;
  flex-direction: column;
  justify-content: space-between;
  padding: 21px 0 44px;
  font-size: 9px;
  line-height: 12px;
`;

const PriceLabel = styled.span`
  display: flex;
  align-items: center;
  gap: 3px;
  &::before {
    content: '';
    width: 2px;
    height: 1px;
    background: #000;
  }
`;

const PriceTag = styled.span`
  position: absolute;
  top: ${({ $top }) => $top}px;
  left: 2px;
  width: 35px;
  padding-left: 3px;
  color: #fff;
  background: ${({ $color }) => $color};
`;

const Tabs = styled.div`
  height: 21px;
  display: flex;
  padding: 0 6px 0 4px;
  border-top: 1px solid #000;
  border-bottom: 1px solid #fff;
`;

const Tab = styled.button`
  height: 18px;
  padding: 0 10px 0 9px;
  color: ${({ $active }) => ($active ? '#000' : '#808080')};
  border: solid #000;
  border-width: ${({ $active }) => ($active ? '0 1px 1px' : 0)};
  ${({ $active }) => !$active && 'box-shadow: 4px 0 0 -3px #808080;'}
`;

const TabScroll = styled.div`
  display: flex;
  align-items: center;
  gap: 12px;
  margin-left: auto;
`;

const StatusBar = styled.footer`
  height: 20px;
  display: flex;
  align-items: center;
`;

const StatusHelp = styled.span`
  flex: 1;
  padding-left: 2px;
`;

const StatusCell = styled.div`
  width: ${({ $width }) => $width}px;
  height: 16px;
  display: flex;
  align-items: center;
  padding-left: 4px;
  border-left: 1px solid #a0a0a0;
`;

const Traffic = styled.span`
  margin-left: 34px;
`;

const TaskBar = styled.div`
  height: 30px;
  display: flex;
  align-items: center;
  gap: 2px;
  color: #fff;
  border-top: 1px solid #3f5f70;
  background: linear-gradient(#8fc0d6 0, #67a9c7 4px, #3d86a5 14px, #00628a 15px, #0080b4 24px, #3fa9d6 29px);
`;

const StartButton = styled.button`
  margin: 0 18px 0 12px;
`;

const Task = styled.button`
  width: 158px;
  height: 26px;
  display: flex;
  align-items: center;
  gap: 3px;
  padding: 0 8px;
  border: 1px solid #63c4dc;
  border-radius: 3px;
  box-shadow: inset 0 0 3px #0b5f80;
`;

const TaskMask = styled.span`
  width: 113px;
  height: 14px;
  overflow: hidden;
  border: 2px solid #000;
  background: #fff;
`;

const TaskTitle = styled.span`
  color: #d8f4fb;
`;

const Tray = styled.div`
  display: flex;
  align-items: center;
  gap: 8px;
  margin-left: auto;
  padding-right: 13px;
`;

const Language = styled.span`
  width: 16px;
  margin-right: 6px;
  line-height: 17px;
  text-align: center;
  background: #3c8fc8;
`;

const TrayIcons = styled.div`
  display: flex;
  gap: 1px;
`;
